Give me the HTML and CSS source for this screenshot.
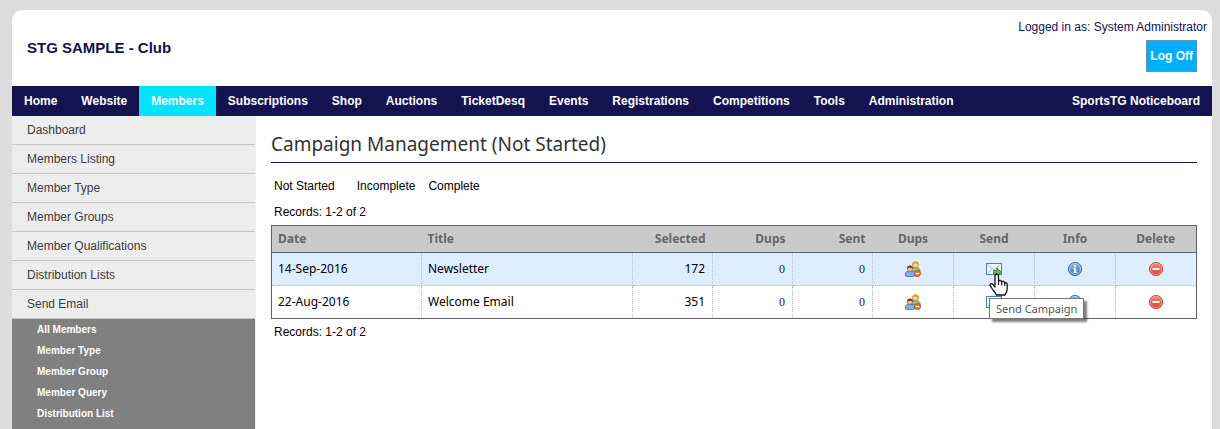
FILE: index.html
```html
<!DOCTYPE html>
<html lang="en">
<head>
    <meta charset="UTF-8">
    <meta name="viewport" content="width=device-width, initial-scale=1.0">
    <title>Campaign Management</title>
    <link rel="stylesheet" href="styles.css">
</head>
<body>
    <!-- Icon set -->
    <svg class="sprite" aria-hidden="true">
        <defs>
            <linearGradient id="blue" x1="0" y1="0" x2="0" y2="1">
                <stop offset="0" stop-color="#8fb9e6"/>
                <stop offset="1" stop-color="#3f78b8"/>
            </linearGradient>
            <linearGradient id="red" x1="0" y1="0" x2="0" y2="1">
                <stop offset="0" stop-color="#f58a7c"/>
                <stop offset="1" stop-color="#dd3b30"/>
            </linearGradient>
        </defs>
        <symbol id="icon-dups" viewBox="0 0 16 16">
            <path d="M5.500 12V9.500c0-2 1.500-3 4.500-3s5 1 5 3V12z" fill="#8fc763" stroke="#4f8f35" stroke-width=".8"/>
            <circle cx="10.500" cy="3.800" r="3" fill="#f6cfa0" stroke="#b5763a" stroke-width=".7"/>
            <path d="M7.300 4C7 1.500 8.500.4 10.500.4s3.700 1.100 3.300 3.600C12.500 3.200 11 2.500 9.500 2.500 8.700 3 8 3.500 7.300 4z" fill="#dc9a35"/>
            <path d="M.5 15v-2.300c0-1.800 1.500-2.700 4.500-2.700s4.700.9 4.700 2.700V15c-2.500.8-6.700.8-9.200 0z" fill="#7fb0ee" stroke="#3469b5" stroke-width=".8"/>
            <circle cx="5" cy="7.700" r="2.700" fill="#f2c497" stroke="#9a5f35" stroke-width=".7"/>
            <path d="M2.100 8C1.900 5.700 3.200 4.600 5 4.600s3.200 1.100 3 3.400C6.800 7.300 5.800 6.800 4.600 6.800 3.600 7 2.800 7.500 2.100 8z" fill="#6d4430"/>
            <circle cx="12.500" cy="12.500" r="3.100" fill="#ea6a1e" stroke="#b8400c" stroke-width=".7"/>
            <rect x="10.500" y="11.800" width="4" height="1.500" fill="#fff"/>
        </symbol>
        <symbol id="icon-send" viewBox="0 0 16 16">
            <rect x=".5" y="2.500" width="15" height="11" fill="#fafdff" stroke="#4a82bd"/>
            <path d="M1.500 3.500L8 9l6.500-5.500M1.500 12.500L6 7.500M14.500 12.500L10 7.500" fill="none" stroke="#8fb5db"/>
            <path d="M7.500 9.500h3.500V7l4.500 4.300L11 15.500V13H7.500z" fill="#6cbb45" stroke="#32852a" stroke-width=".9"/>
        </symbol>
        <symbol id="icon-info" viewBox="0 0 16 16">
            <circle cx="8" cy="8" r="6.600" fill="url(#blue)" stroke="#376294" stroke-width=".9"/>
            <circle cx="8" cy="8" r="5.500" fill="none" stroke="#b9d3ee" stroke-width=".8"/>
            <path d="M7 4h2v1.700H7zM6.300 6.700H9v4h.8V12H6.200v-1.300H7V8h-.7z" fill="#fff"/>
        </symbol>
        <symbol id="icon-delete" viewBox="0 0 16 16">
            <circle cx="8" cy="8" r="6.600" fill="url(#red)" stroke="#c43c33" stroke-width=".9"/>
            <circle cx="8" cy="8" r="5.600" fill="none" stroke="#f9b3aa" stroke-width=".7"/>
            <rect x="4.500" y="7" width="7" height="2" fill="#fff"/>
        </symbol>
    </svg>

    <div class="page">
        <header class="header">
            <h1 class="club-name">STG SAMPLE - Club</h1>
            <div class="account">
                <p class="logged-in">Logged in as: System Administrator</p>
                <button class="log-off" type="button">Log Off</button>
            </div>
        </header>

        <nav class="main-nav">
            <a href="#home">Home</a>
            <a href="#website">Website</a>
            <a href="#members" class="active">Members</a>
            <a href="#subscriptions">Subscriptions</a>
            <a href="#shop">Shop</a>
            <a href="#auctions">Auctions</a>
            <a href="#ticketdesq">TicketDesq</a>
            <a href="#events">Events</a>
            <a href="#registrations">Registrations</a>
            <a href="#competitions">Competitions</a>
            <a href="#tools">Tools</a>
            <a href="#administration">Administration</a>
            <a href="#noticeboard" class="noticeboard">SportsTG Noticeboard</a>
        </nav>

        <div class="content">
            <aside class="sidebar">
                <ul class="side-menu">
                    <li><a href="#dashboard">Dashboard</a></li>
                    <li><a href="#listing">Members Listing</a></li>
                    <li><a href="#type">Member Type</a></li>
                    <li><a href="#groups">Member Groups</a></li>
                    <li><a href="#qualifications">Member Qualifications</a></li>
                    <li><a href="#lists">Distribution Lists</a></li>
                    <li><a href="#send-email">Send Email</a></li>
                </ul>
                <ul class="sub-menu">
                    <li><a href="#email-all">All Members</a></li>
                    <li><a href="#email-type">Member Type</a></li>
                    <li><a href="#email-group">Member Group</a></li>
                    <li><a href="#email-query">Member Query</a></li>
                    <li><a href="#email-list">Distribution List</a></li>
                </ul>
            </aside>

            <main class="main">
                <h2 class="title">Campaign Management (Not Started)</h2>
                <div class="filters">
                    <a href="#not-started" class="current">Not Started</a>
                    <a href="#incomplete">Incomplete</a>
                    <a href="#complete">Complete</a>
                </div>
                <p class="records">Records: 1-2 of 2</p>
                <table class="campaigns">
                    <colgroup>
                        <col class="col-date">
                        <col>
                        <col class="col-number" span="3">
                        <col class="col-action" span="4">
                    </colgroup>
                    <thead>
                        <tr>
                            <th>Date</th>
                            <th>Title</th>
                            <th class="number">Selected</th>
                            <th class="number">Dups</th>
                            <th class="number">Sent</th>
                            <th class="action">Dups</th>
                            <th class="action">Send</th>
                            <th class="action">Info</th>
                            <th class="action">Delete</th>
                        </tr>
                    </thead>
                    <tbody>
                        <tr class="highlight">
                            <td>14-Sep-2016</td>
                            <td>Newsletter</td>
                            <td class="number">172</td>
                            <td class="number zero">0</td>
                            <td class="number zero">0</td>
                            <td class="action"><a href="#dups-1" aria-label="Dups"><svg class="icon"><use href="#icon-dups"/></svg></a></td>
                            <td class="action">
                                <a href="#send-1" class="send-link">
                                    <svg class="icon"><use href="#icon-send"/></svg>
                                    <span class="tooltip">Send Campaign</span>
                                    <svg class="pointer" viewBox="0 0 19 24">
                                        <path d="M6 14V3.200C6 .6 9.500.6 9.500 3.200V8.500C10 7 12.500 7.200 12.700 9 13.400 7.900 15.500 8.300 15.700 10 16.600 9.200 18.200 9.800 18.200 11.500V16C18.200 19 16.800 20 16 22H7.500C6.500 19.500 4.500 18 3 15.500L1.200 12.700C.3 11 2.500 9.800 3.800 11.200z" fill="#fff" stroke="#111" stroke-width="1.300" stroke-linejoin="round"/>
                                        <path d="M9.500 8.500V12M12.700 9V12.500M15.700 10V13" fill="none" stroke="#111" stroke-width="1.200"/>
                                    </svg>
                                </a>
                            </td>
                            <td class="action"><a href="#info-1" aria-label="Info"><svg class="icon"><use href="#icon-info"/></svg></a></td>
                            <td class="action"><a href="#delete-1" aria-label="Delete"><svg class="icon"><use href="#icon-delete"/></svg></a></td>
                        </tr>
                        <tr>
                            <td>22-Aug-2016</td>
                            <td>Welcome Email</td>
                            <td class="number">351</td>
                            <td class="number zero">0</td>
                            <td class="number zero">0</td>
                            <td class="action"><a href="#dups-2" aria-label="Dups"><svg class="icon"><use href="#icon-dups"/></svg></a></td>
                            <td class="action"><a href="#send-2" aria-label="Send"><svg class="icon"><use href="#icon-send"/></svg></a></td>
                            <td class="action"><a href="#info-2" aria-label="Info"><svg class="icon"><use href="#icon-info"/></svg></a></td>
                            <td class="action"><a href="#delete-2" aria-label="Delete"><svg class="icon"><use href="#icon-delete"/></svg></a></td>
                        </tr>
                    </tbody>
                </table>
                <p class="records">Records: 1-2 of 2</p>
            </main>
        </div>
    </div>
</body>
</html>
```

FILE: styles.css
```css
body {
    margin: 0;
    padding: 10px 8px 0 12px;
    background-color: #dcdcdc;
    font-family: Arial, "Liberation Sans", sans-serif;
    font-size: 12px;
    line-height: 16px;
    color: #000;
}

h1, h2, p, ul {
    margin: 0;
    padding: 0;
}

ul {
    list-style: none;
}

a {
    color: inherit;
    text-decoration: none;
}

.sprite {
    position: absolute;
    width: 0;
    height: 0;
}

.page {
    background-color: #fff;
    border-radius: 10px 10px 0 0;
}

/* Header */
.header {
    display: flex;
    justify-content: space-between;
    height: 76px;
    padding: 0 5px 0 15px;
    color: #14124f;
}

.club-name {
    font-size: 15px;
    line-height: 76px;
}

.account {
    display: flex;
    flex-direction: column;
    align-items: flex-end;
    gap: 5px;
    padding-top: 9px;
}

.log-off {
    height: 32px;
    margin-right: 10px;
    padding: 0 3px;
    border: 1px solid #5d97bd;
    background-color: #00aeff;
    color: #fff;
    font: bold 12px Arial, "Liberation Sans", sans-serif;
}

/* Navigation */
.main-nav {
    display: flex;
    background-color: #14124f;
    color: #fff;
    font-weight: bold;
    line-height: 30px;
}

.main-nav a {
    padding: 0 12px;
}

.main-nav .active {
    background-color: #00e5ff;
}

.main-nav .noticeboard {
    margin-left: auto;
}

.content {
    display: flex;
}

/* Sidebar */
.sidebar {
    flex: none;
    width: 244px;
    background-color: #ededed;
    color: #3c3c3c;
}

.side-menu,
.sub-menu {
    margin-right: 1px;
}

.side-menu a {
    display: block;
    padding: 6px 15px;
    border-bottom: 1px solid #c4c4c4;
}

.sub-menu {
    padding-bottom: 6px;
    background-color: #808080;
    color: #fff;
    font-size: 10px;
    font-weight: bold;
    line-height: 21px;
}

.sub-menu a {
    display: block;
    padding-left: 25px;
}

/* Main area */
.main {
    flex: 1;
    padding: 15px 15px 0;
}

.title {
    padding-bottom: 5px;
    border-bottom: 1px solid #14124f;
    color: #333;
    font-family: Tahoma, "Noto Sans", sans-serif;
    font-size: 19px;
    font-weight: normal;
    line-height: 26px;
}

.filters {
    display: flex;
    gap: 13px;
    padding: 15px 3px 10px;
}

.filters .current {
    margin-right: 9px;
}

.records {
    padding: 0 3px;
    line-height: 26px;
}

.filters + .records {
    line-height: 16px;
    padding-bottom: 5px;
}

.campaigns {
    width: 100%;
    table-layout: fixed;
    border: 1px solid #606266;
    border-collapse: collapse;
    font-family: Tahoma, "Noto Sans", sans-serif;
}

.col-date {
    width: 150px;
}

.col-number {
    width: 80px;
}

.col-action {
    width: 81px;
}

.campaigns th {
    height: 26px;
    padding: 0 7px 0 6px;
    border-bottom: 1px solid #606266;
    background-color: #cacaca;
    color: #666;
    text-align: left;
}

.campaigns td {
    height: 32px;
    padding: 0 7px 0 6px;
    border: 1px dotted #b4bcc8;
}

.campaigns td:first-child {
    border-left: 1px solid #606266;
}

.campaigns td:last-child {
    border-right: 1px solid #606266;
}

.campaigns tr:last-child td {
    border-bottom: 1px solid #606266;
}

.campaigns .highlight td {
    border-top: 1px solid #606266;
    background-color: #deedff;
}

.campaigns .number {
    text-align: right;
}

.campaigns .action {
    padding: 0;
    text-align: center;
}

.campaigns .zero {
    color: #222244;
    font-family: "Times New Roman", "Liberation Serif", serif;
}

.icon {
    width: 16px;
    height: 16px;
    vertical-align: middle;
}

/* Hover state of the send icon */
.send-link {
    position: relative;
}

.tooltip {
    position: absolute;
    top: 38px;
    left: 3px;
    z-index: 1;
    padding: 0 6px;
    border: 1px solid #767676;
    background-color: #fff;
    box-shadow: 3px 3px 2px rgba(0, 0, 0, 0.5);
    color: #575757;
    font-size: 11px;
    line-height: 19px;
    white-space: nowrap;
}

.pointer {
    position: absolute;
    top: 13px;
    left: 3px;
    z-index: 2;
    width: 19px;
    height: 24px;
}
```
